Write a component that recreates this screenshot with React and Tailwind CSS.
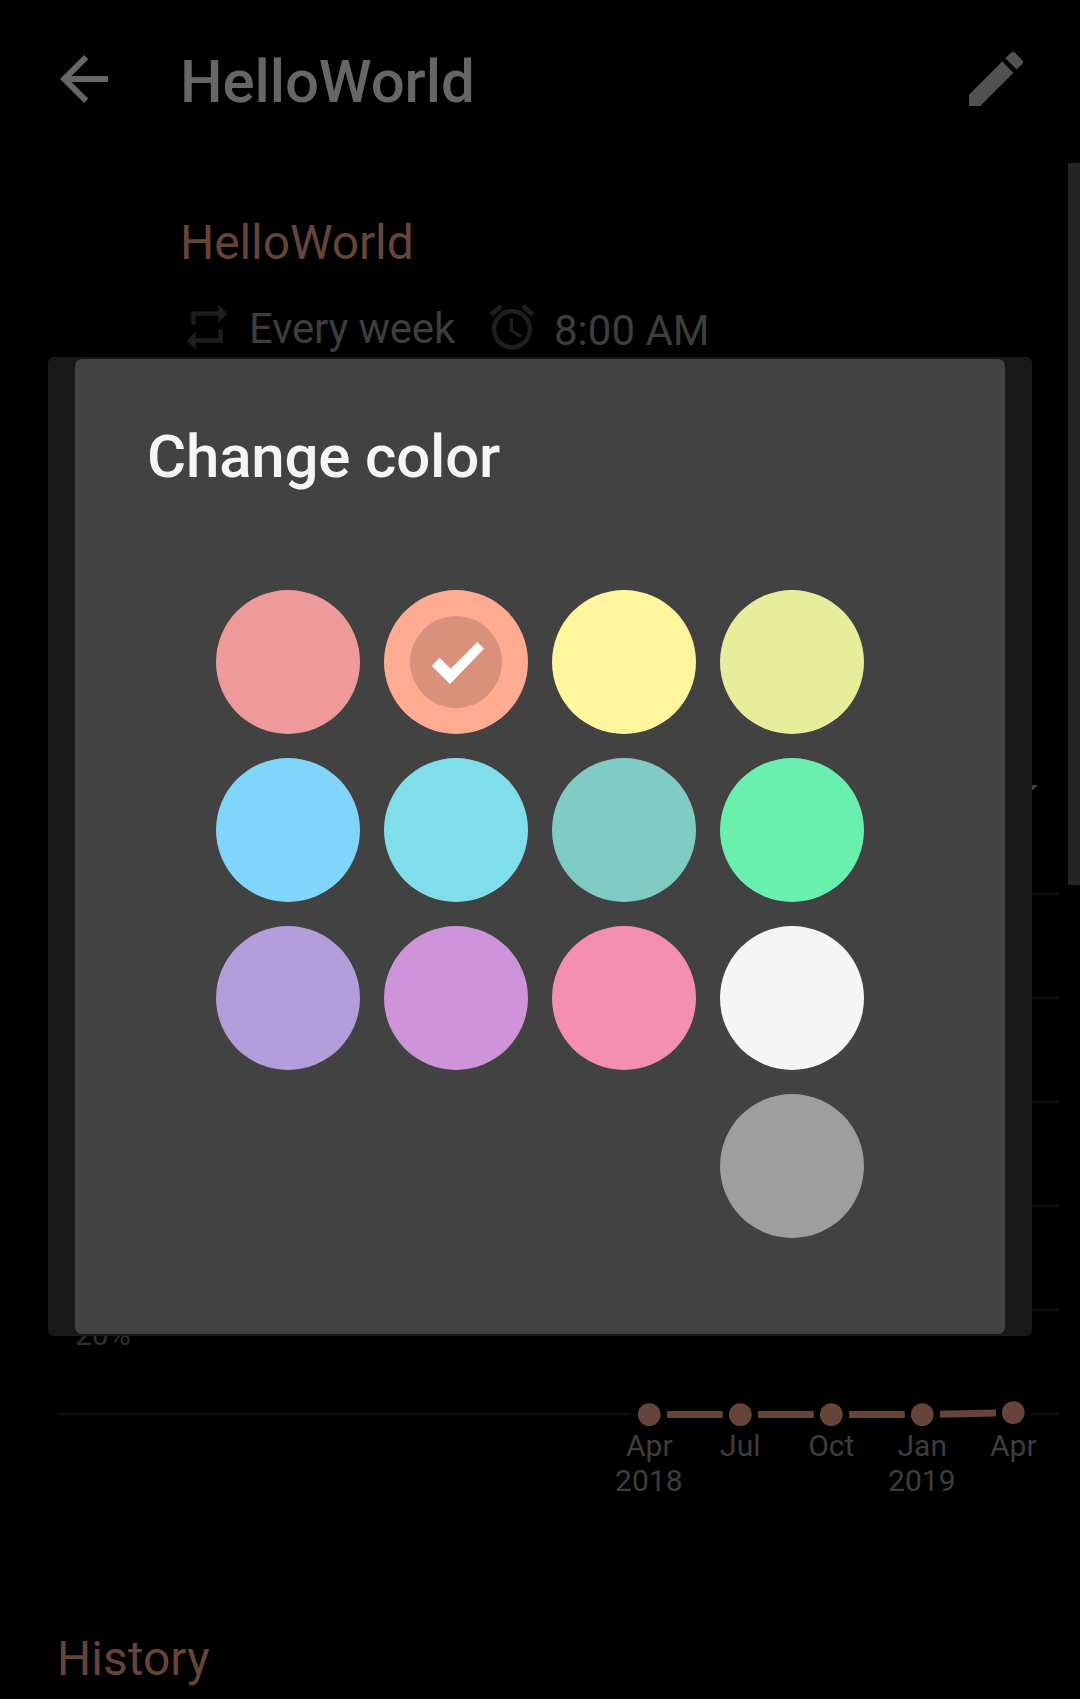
const swatches = [
  { name: "Red", cls: "bg-[#ef9a9a]" },
  { name: "Deep orange", cls: "bg-[#ffab91]", selected: true },
  { name: "Yellow", cls: "bg-[#fff59d]" },
  { name: "Lime", cls: "bg-[#e6ee9c]" },
  { name: "Light blue", cls: "bg-[#81d4fa]" },
  { name: "Cyan", cls: "bg-[#80deea]" },
  { name: "Teal", cls: "bg-[#80cbc4]" },
  { name: "Green", cls: "bg-[#69f0ae]" },
  { name: "Deep purple", cls: "bg-[#b39ddb]" },
  { name: "Purple", cls: "bg-[#ce93d8]" },
  { name: "Pink", cls: "bg-[#f48fb1]" },
  { name: "White", cls: "bg-[#f5f5f5]" },
  { name: "Grey", cls: "col-start-4 bg-[#9e9e9e]" },
];

const points = [
  { x: 649.3, y: 1414.6, month: "Apr", year: "2018" },
  { x: 740.3, y: 1414.6, month: "Jul" },
  { x: 831.3, y: 1414.6, month: "Oct" },
  { x: 922.3, y: 1414.6, month: "Jan", year: "2019" },
  { x: 1013.3, y: 1412.6, month: "Apr" },
];

function Icon({ d, className }) {
  return (
    <svg viewBox="0 0 24 24" fill="currentColor" className={className}>
      <path d={d} />
    </svg>
  );
}

function Header() {
  return (
    <header className="flex h-[163px] items-start pt-[43px] pr-12 pl-12">
      <Icon
        className="size-[72px] shrink-0 text-[#666666]"
        d="M20 11H7.83l5.59-5.59L12 4l-8 8 8 8 1.41-1.41L7.83 13H20v-2z"
      />
      <h1 className="mt-1 ml-[60px] flex-1 text-[60px] leading-[70px] font-medium tracking-[-0.1px] text-[#666666]">HelloWorld</h1>
      <Icon
        className="size-[72px] shrink-0 text-[#525252]"
        d="M3 17.25V21h3.75L17.81 9.94l-3.75-3.75L3 17.25zM20.71 7.04a.996.996 0 0 0 0-1.41l-2.34-2.34a.996.996 0 0 0-1.41 0l-1.83 1.83 3.75 3.75 1.83-1.83z"
      />
    </header>
  );
}

function Summary() {
  return (
    <section className="h-[597px] pt-[52px] pl-[180px]">
      <h2 className="text-[48px] leading-[56px] tracking-[-0.1px] text-[#66443a]">HelloWorld</h2>
      <div className="mt-[29px] flex items-start text-[42px] leading-[50px] text-[#3d3d3d]">
        <Icon
          className="size-[54px] text-[#1e1e1e]"
          d="M7 7h10v3l4-4-4-4v3H5v6h2V7zm10 10H7v-3l-4 4 4 4v-3h12v-6h-2v4z"
        />
        <span className="mt-1 ml-[15px] w-[236px] tracking-[-0.2px] whitespace-nowrap">Every week</span>
        <Icon
          className="size-[54px] text-[#1e1e1e]"
          d="M22 5.72l-4.6-3.86-1.29 1.53 4.6 3.86L22 5.72zM7.88 3.39L6.6 1.86 2 5.71l1.29 1.53 4.59-3.85zM12.5 8H11v6l4.75 2.85.75-1.23-4-2.37V8zM12 4c-4.97 0-9 4.03-9 9s4.02 9 9 9c4.97 0 9-4.03 9-9s-4.03-9-9-9zm0 16c-3.87 0-7-3.13-7-7s3.13-7 7-7 7 3.13 7 7-3.13 7-7 7z"
        />
        <span className="mt-1.5 ml-[15px] whitespace-nowrap">8:00 AM</span>
      </div>
    </section>
  );
}

function HistoryChart() {
  return (
    <svg viewBox="0 760 1080 760" className="block h-[760px] w-full">
      <path d="M1014 785h24l-12 12z" fill="#3d3d3d" />
      <g stroke="#0d0d0d" strokeWidth="3">
        {[894, 998, 1102, 1206, 1310].map((y) => (
          <line key={y} x1="57" x2="1059" y1={y} y2={y} />
        ))}
        <line x1="57" x2="631" y1="1414" y2="1414" />
        <line x1="1031" x2="1059" y1="1414" y2="1414" />
      </g>
      <text x="75" y="1345" fontSize="30" fill="#303030">20%</text>
      <g stroke="#66443a" strokeWidth="7">
        <path d="M667 1414.5h55.7M758 1414.5h55.7M849 1414.5h55.7M940 1414.2l56-1.2" />
      </g>
      {points.map((p) => (
        <g key={p.x}>
          <circle cx={p.x} cy={p.y} r="11.4" fill="#66443a" />
          <g fontSize="30" fill="#3d3d3d" textAnchor="middle">
            <text x={p.x} y="1456">{p.month}</text>
            {p.year && <text x={p.x - 0.5} y="1491">{p.year}</text>}
          </g>
        </g>
      ))}
    </svg>
  );
}

function SelectedMark() {
  return (
    <svg viewBox="0 0 144 144" className="size-36">
      <circle cx="72" cy="72" r="46" fill="#000" opacity="0.15" />
      <path d="M47.7 76L55.5 67.8L66.8 78.8L93.3 52L100 58.7L66 94Z" fill="#fff" />
    </svg>
  );
}

function ColorDialog() {
  return (
    <div className="absolute top-[357px] left-12 h-[979px] w-[984px] overflow-hidden rounded-md bg-[#191919] px-[27px] py-0.5">
      <div role="dialog" className="h-[975px] rounded-[7px] bg-[#424242] px-[141px] pt-[63px]">
        <h2 className="-ml-[69px] text-[60px] leading-[70px] font-medium tracking-[-0.18px] text-[#f5f5f5]">Change color</h2>
        <div className="mt-[98px] grid grid-cols-4 gap-6">
          {swatches.map((s) => (
            <button key={s.name} aria-label={s.name} className={`size-36 rounded-full ${s.cls}`}>
              {s.selected && <SelectedMark />}
            </button>
          ))}
        </div>
      </div>
    </div>
  );
}

export default function App() {
  return (
    <div className="relative h-[1699px] w-[1080px] overflow-hidden bg-black font-[Roboto,sans-serif]">
      <Header />
      <Summary />
      <HistoryChart />
      <h2 className="mt-[111px] ml-[57px] text-[48px] leading-[56px] text-[#66443a]">History</h2>
      <div className="absolute top-[163px] right-0 h-[722px] w-3 bg-[#242424]" />
      <ColorDialog />
    </div>
  );
}
